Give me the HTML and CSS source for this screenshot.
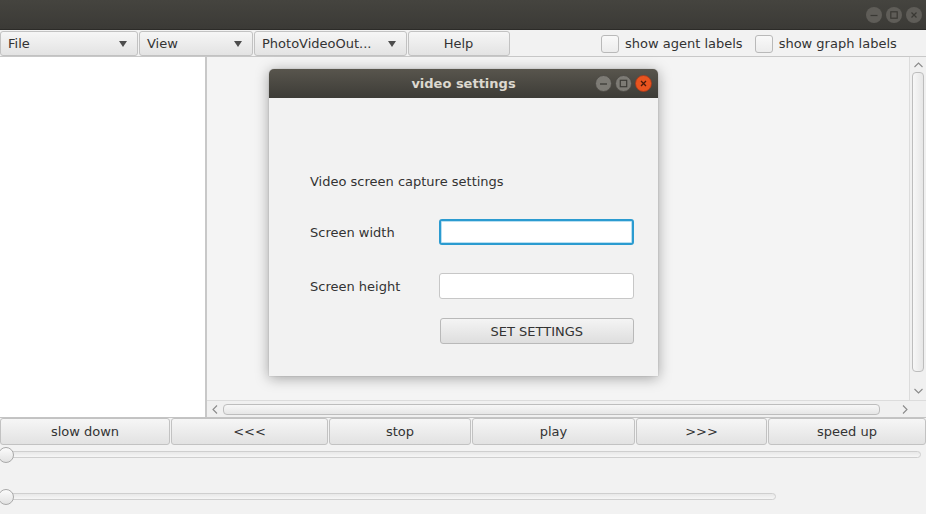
FILE: index.html
```html
<!DOCTYPE html>
<html>
<head>
<meta charset="utf-8">
<link rel="stylesheet" href="styles.css">
</head>
<body>
<div class="app">
  <div class="titlebar">
    <div class="wbtns">
      <span class="wbtn"><svg width="16" height="16" viewBox="0 0 16 16"><circle cx="8" cy="8" r="8" fill="#5f5d58"/><path d="M4.5 8.5h7" stroke="#3a3934" stroke-width="1.2"/></svg></span>
      <span class="wbtn"><svg width="16" height="16" viewBox="0 0 16 16"><circle cx="8" cy="8" r="8" fill="#5f5d58"/><rect x="4.8" y="4.8" width="6.4" height="6.4" fill="none" stroke="#3a3934" stroke-width="1.2"/></svg></span>
      <span class="wbtn"><svg width="16" height="16" viewBox="0 0 16 16"><circle cx="8" cy="8" r="8" fill="#5f5d58"/><path d="M5.5 5.5l5 5M10.5 5.5l-5 5" stroke="#3a3934" stroke-width="1.2"/></svg></span>
    </div>
  </div>
  <div class="menubar">
    <div class="mbtn m-file"><span>File</span><i class="tri"></i></div>
    <div class="mbtn m-view"><span>View</span><i class="tri"></i></div>
    <div class="mbtn m-photo"><span>PhotoVideoOut...</span><i class="tri"></i></div>
    <div class="mbtn m-help center"><span>Help</span></div>
    <div class="checks">
      <label class="chk"><span class="box"></span>show agent labels</label>
      <label class="chk"><span class="box"></span>show graph labels</label>
    </div>
  </div>
  <div class="main">
    <div class="leftpane"></div>
    <div class="rightpane">
      <div class="viewport-row">
        <div class="viewport"></div>
        <div class="vscroll">
          <span class="arrow up"><svg width="9" height="6" viewBox="0 0 9 6"><path d="M0.5 5l4-4 4 4" fill="none" stroke="#8a8a8a" stroke-width="1.1"/></svg></span>
          <div class="vthumb"></div>
          <span class="arrow down"><svg width="9" height="6" viewBox="0 0 9 6"><path d="M0.5 1l4 4 4-4" fill="none" stroke="#8a8a8a" stroke-width="1.1"/></svg></span>
        </div>
      </div>
      <div class="hscroll-row">
        <div class="hscroll">
          <span class="arrow left"><svg width="6" height="9" viewBox="0 0 6 9"><path d="M5 0.5l-4 4 4 4" fill="none" stroke="#8a8a8a" stroke-width="1.1"/></svg></span>
          <div class="hthumb"></div>
          <span class="arrow right"><svg width="6" height="9" viewBox="0 0 6 9"><path d="M1 0.5l4 4-4 4" fill="none" stroke="#8a8a8a" stroke-width="1.1"/></svg></span>
        </div>
        <div class="corner"></div>
      </div>
    </div>
  </div>
  <div class="controls">
    <div class="cbtn w1">slow down</div>
    <div class="cbtn w2">&lt;&lt;&lt;</div>
    <div class="cbtn w3">stop</div>
    <div class="cbtn w4">play</div>
    <div class="cbtn w5">&gt;&gt;&gt;</div>
    <div class="cbtn w6">speed up</div>
  </div>
  <div class="sliders">
    <div class="slider s1"><div class="track"></div><div class="knob"></div></div>
    <div class="slider s2"><div class="track"></div><div class="knob"></div></div>
  </div>

  <div class="dialog">
    <div class="dtitle">
      <span class="dtext">video settings</span>
      <div class="dbtns">
        <svg width="17" height="17" viewBox="0 0 17 17"><circle cx="8.5" cy="8.5" r="8" fill="#7d7b75" stroke="#4a4843" stroke-width="0.8"/><path d="M5 9h7" stroke="#3c3b37" stroke-width="1.3"/></svg>
        <svg width="17" height="17" viewBox="0 0 17 17"><circle cx="8.5" cy="8.5" r="8" fill="#7d7b75" stroke="#4a4843" stroke-width="0.8"/><rect x="5.3" y="5.3" width="6.4" height="6.4" fill="none" stroke="#3c3b37" stroke-width="1.2"/></svg>
        <svg width="17" height="17" viewBox="0 0 17 17"><circle cx="8.5" cy="8.5" r="8" fill="#e9541f" stroke="#a8391a" stroke-width="0.8"/><path d="M6 6l5 5M11 6l-5 5" stroke="#4a1a0a" stroke-width="1.3"/></svg>
      </div>
    </div>
    <div class="dbody">
      <div class="dhead">Video screen capture settings</div>
      <div class="frow r1"><span class="flabel">Screen width</span><div class="field focused"></div></div>
      <div class="frow r2"><span class="flabel">Screen height</span><div class="field"></div></div>
      <div class="frow r3"><span class="flabel"></span><div class="setbtn">SET SETTINGS</div></div>
    </div>
  </div>
</div>
</body>
</html>
```

FILE: styles.css
```css
* { box-sizing: border-box; }
html, body { margin: 0; padding: 0; }
body {
  width: 926px; height: 514px; overflow: hidden;
  background: #f2f2f2;
  font-family: "DejaVu Sans", "Liberation Sans", sans-serif;
  font-size: 13px; color: #333;
}
.app { position: relative; width: 926px; height: 514px; display: flex; flex-direction: column; }

.titlebar {
  height: 30px; flex: none;
  background: linear-gradient(#45443f, #3b3a36);
  border-bottom: 1px solid #2c2b28;
  display: flex; justify-content: flex-end; align-items: center;
  padding-right: 4px;
}
.wbtns { display: flex; gap: 4px; margin-top: 1px; }
.wbtn { width: 16px; height: 16px; display: block; }
.wbtn svg { display: block; }

.menubar {
  height: 27px; flex: none;
  display: flex; align-items: stretch;
  padding-top: 1px;
  background: #f2f2f2;
  border-bottom: 1px solid #c8c8c8;
}
.mbtn {
  display: flex; align-items: center; justify-content: space-between;
  height: 25px;
  padding: 0 8px 0 7px;
  margin-right: 1px;
  background: linear-gradient(#f6f6f6, #e3e3e3);
  border: 1px solid #c2c2c2;
  border-radius: 3px;
  color: #333;
  font-size: 13px;
}
.mbtn.center { justify-content: center; }
.m-file { width: 138px; }
.m-view { width: 114px; }
.m-photo { width: 153px; }
.m-help { width: 102px; }
.tri {
  width: 0; height: 0;
  border-left: 4.5px solid transparent; border-right: 4.5px solid transparent;
  border-top: 6px solid #4d4d4d;
  margin-right: 2px;
}
.checks { display: flex; align-items: center; margin-left: 90px; gap: 0; }
.chk { display: flex; align-items: center; color: #333; font-size: 13px; margin-right: 12px; }
.box {
  width: 18px; height: 18px;
  border: 1px solid #b9b9b9; border-radius: 3px;
  background: linear-gradient(#f9f9f9, #ececec);
  margin-right: 6px;
}

.main { height: 361px; flex: none; display: flex; border-bottom: 1px solid #c4c4c4; }
.leftpane { width: 207px; background: #ffffff; border-right: 2px solid #c8c8c8; }
.rightpane { flex: 1; display: flex; flex-direction: column; background: #f4f4f4; }
.viewport-row { flex: 1; display: flex; }
.viewport { flex: 1; }
.vscroll {
  width: 17px; position: relative;
  border-left: 1px solid #dcdcdc;
  background: #f0f0f0;
  display: flex; flex-direction: column; align-items: center;
}
.arrow { display: flex; align-items: center; justify-content: center; }
.arrow svg { display: block; }
.vscroll .up { height: 14px; margin-top: 1px; }
.vthumb {
  width: 12px; height: 300px;
  border: 1px solid #bdbdbd; border-radius: 4px;
  background: linear-gradient(90deg, #f7f7f7, #e6e6e6);
}
.vscroll .down { height: 14px; margin-top: auto; margin-bottom: 2px; }
.hscroll-row { height: 17px; display: flex; }
.hscroll {
  flex: 1; display: flex; align-items: center;
  border-top: 1px solid #dcdcdc; background: #f0f0f0;
  padding-left: 3px;
}
.hscroll .left { width: 10px; }
.hthumb {
  width: 657px; height: 11px; margin-left: 3px;
  border: 1px solid #bdbdbd; border-radius: 4px;
  background: linear-gradient(#f7f7f7, #e6e6e6);
}
.hscroll .right { margin-left: 22px; }
.corner { width: 17px; background: #f0f0f0; border-top: 1px solid #dcdcdc; }

.controls { height: 27px; flex: none; display: flex; }
.cbtn {
  height: 27px;
  display: flex; align-items: center; justify-content: center;
  background: linear-gradient(#f6f6f6, #e2e2e2);
  border: 1px solid #c2c2c2; border-radius: 3px;
  margin-right: 1px;
  color: #333; font-size: 13px;
}
.w1 { width: 170px; }
.w2 { width: 157px; }
.w3 { width: 142px; }
.w4 { width: 163px; }
.w5 { width: 131px; }
.w6 { flex: 1; margin-right: 0; }

.sliders { flex: 1; position: relative; }
.slider { position: relative; height: 16px; }
.s1 { margin-top: 2px; width: 921px; }
.s2 { margin-top: 26px; width: 776px; }
.track {
  position: absolute; left: 0; right: 0; top: 4px; height: 7px;
  border: 1px solid #cfcfcf; border-radius: 4px;
  background: linear-gradient(#e8e8e8, #f6f6f6);
}
.knob {
  position: absolute; left: -2px; top: 0; width: 16px; height: 16px;
  border-radius: 50%;
  border: 1px solid #a9a9a9;
  background: linear-gradient(#fbfbfb, #e2e2e2);
}

.dialog {
  position: absolute; left: 269px; top: 69px;
  width: 389px; height: 307px;
  background: #f2f2f2;
  border-radius: 5px 5px 0 0;
  box-shadow: 0 2px 14px rgba(0,0,0,0.35), 0 0 1px rgba(0,0,0,0.4);
  display: flex; flex-direction: column;
}
.dtitle {
  height: 29px; flex: none; position: relative;
  background: linear-gradient(#58554d, #3d3c37);
  border-radius: 5px 5px 0 0;
  display: flex; align-items: center; justify-content: center;
}
.dtext { color: #dcd8cf; font-weight: bold; font-size: 13px; letter-spacing: 0; }
.dbtns {
  position: absolute; right: 6px; top: 6px;
  display: flex; gap: 3px;
}
.dbtns svg { display: block; }
.dbody { flex: 1; padding: 0 24px 0 41px; display: flex; flex-direction: column; }
.dhead { margin-top: 76px; height: 16px; line-height: 16px; color: #333; }
.frow { display: flex; align-items: center; }
.flabel { width: 129px; color: #333; }
.r1 { margin-top: 29px; }
.r2 { margin-top: 28px; }
.r3 { margin-top: 19px; }
.field {
  width: 195px; height: 26px;
  background: #fff;
  border: 1px solid #c7c7c7; border-radius: 3px;
}
.field.focused { border: 2px solid #2b9bd0; box-shadow: inset 0 0 0 1px #b9dff1; }
.setbtn {
  width: 195px; height: 26px; margin-left: 1px;
  display: flex; align-items: center; justify-content: center;
  background: linear-gradient(#f4f4f4, #dedede);
  border: 1px solid #b9b9b9; border-radius: 3px;
  color: #333;
}
```
